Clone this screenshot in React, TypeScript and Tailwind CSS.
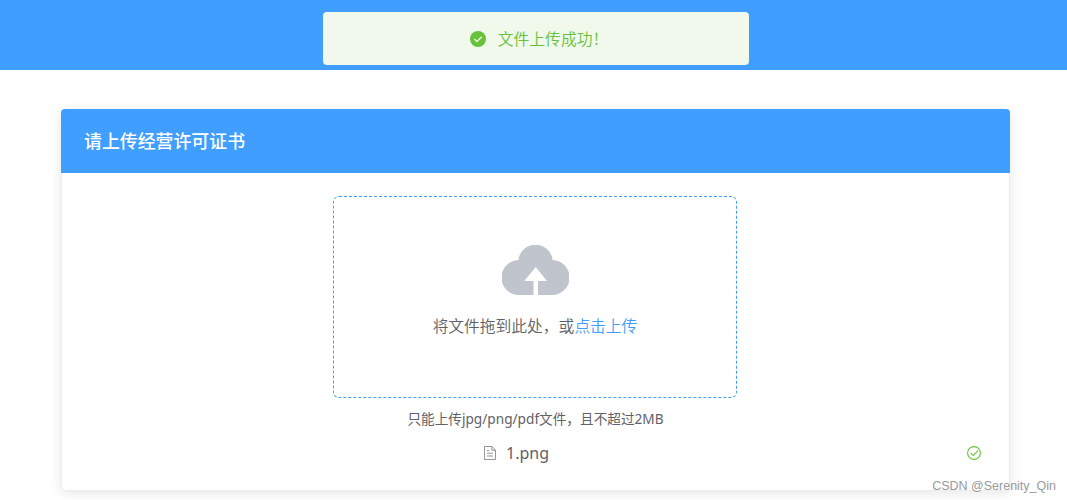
interface UploadedFile {
  name: string;
  done: boolean;
}

const files: UploadedFile[] = [{ name: "1.png", done: true }];

const CloudIcon = () => (
  <svg width="67" height="50" viewBox="0 0 67 50" fill="#c0c4cc">
    <path d="M17.5 50A17.5 17.5 0 0 1 16.4 15A17.2 17.2 0 0 1 50.6 15A17.5 17.5 0 0 1 49.5 50H36V36H45L33.7 22L22.3 36H31.5V50Z" />
  </svg>
);

const DocumentIcon = () => (
  <svg width="12" height="14" viewBox="0 0 12 14" fill="none" stroke="#909399">
    <path d="M0.5 0.5H8L11.5 4V13.5H0.5Z" />
    <path d="M7.8 0.8V4.2H11.2M3 4.6H5.4M3 7.2H9M3 10H9" />
  </svg>
);

const CircleCheckIcon = () => (
  <svg width="14" height="14" viewBox="0 0 14 14" fill="none" stroke="#67c23a">
    <circle cx="7" cy="7" r="6.4" strokeWidth="1.1" />
    <path d="M3.6 6.8L6.4 9.5L10.8 4.7" strokeWidth="1.1" />
  </svg>
);

function Toast({ text }: { text: string }) {
  return (
    <div className="w-[426px] h-[53px] pl-[6px] rounded bg-[#f0f9eb] flex items-center justify-center gap-[12px] text-[#67c23a] text-[15.8px]">
      <svg width="16" height="16" viewBox="0 0 16 16" className="shrink-0">
        <circle cx="8" cy="8" r="8" fill="#67c23a" />
        <path d="M4.3 8.1L7 10.5L11.8 5.8" fill="none" stroke="#f0f9eb" strokeWidth="1.3" />
      </svg>
      <span className="pt-[2px] leading-none font-[350]">{text}</span>
    </div>
  );
}

function FileRow({ file }: { file: UploadedFile }) {
  return (
    <div className="w-full h-[28px] flex items-center justify-between pl-[422px] pr-[28px]">
      <div className="flex items-center gap-[10px] text-[#606266]">
        <DocumentIcon />
        <span className="text-[16px] leading-none">{file.name}</span>
      </div>
      {file.done && <CircleCheckIcon />}
    </div>
  );
}

export default function App() {
  return (
    <div className="relative w-full h-[500px] overflow-hidden bg-white font-['Noto_Sans','Noto_Sans_CJK_SC',sans-serif]">
      <header className="h-[70px] pt-[12px] pl-[5px] bg-[#409eff] flex items-start justify-center">
        <Toast text="文件上传成功！" />
      </header>

      <main className="pt-[39px] pl-[61px]">
        <section className="w-[949px] h-[382px] rounded bg-white border border-[#ebeef5] shadow-[0_2px_12px_0_rgba(0,0,0,0.1)]">
          <h1 className="-mx-px -mt-px h-[64px] pl-[23px] pt-px rounded-t bg-[#409eff] text-white text-[17.9px] font-medium flex items-center">
            请上传经营许可证书
          </h1>
          <div className="pt-[23px] flex flex-col items-center">
            <div className="w-[404px] h-[202px] -ml-px rounded-md border border-dashed border-[#409eff] pt-[48px] flex flex-col items-center">
              <CloudIcon />
              <p className="mt-[19px] text-[15.75px] leading-6 font-[350] text-[#606266] whitespace-nowrap">
                将文件拖到此处，或<em className="not-italic text-[#409eff]">点击上传</em>
              </p>
            </div>
            <p className="mt-[11px] text-[13.65px] leading-5 text-[#606266] whitespace-nowrap">
              只能上传jpg/png/pdf文件，且不超过2MB
            </p>
            <div className="mt-[10px] w-full">
              {files.map((f) => (
                <FileRow key={f.name} file={f} />
              ))}
            </div>
          </div>
        </section>
      </main>

      <div className="absolute right-[11px] bottom-[6px] font-['Liberation_Sans',sans-serif] text-[12.5px] leading-4 text-[#999]">
        CSDN @Serenity_Qin
      </div>
    </div>
  );
}
